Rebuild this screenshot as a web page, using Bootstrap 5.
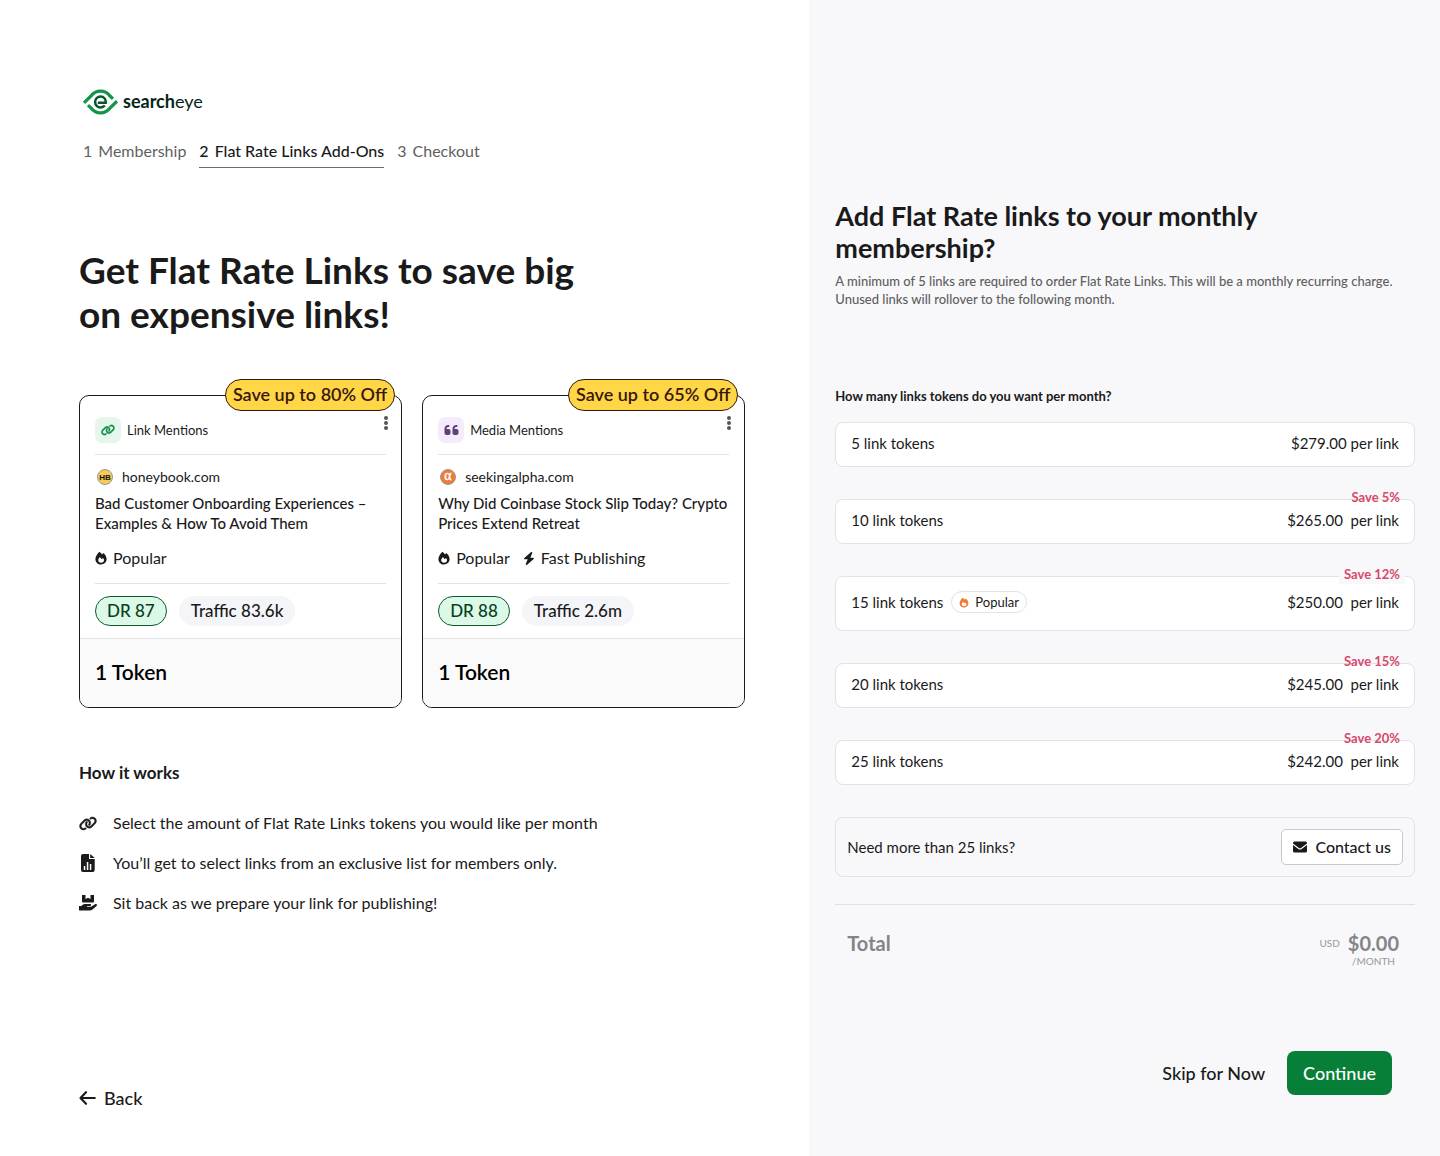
<!DOCTYPE html>
<html lang="en">
<head>
<meta charset="utf-8">
<meta name="viewport" content="width=device-width, initial-scale=1">
<title>Searcheye – Flat Rate Links Add-Ons</title>
<link href="https://cdn.jsdelivr.net/npm/bootstrap@5.3.0/dist/css/bootstrap.min.css" rel="stylesheet">
<style>
body{font-family:Lato,"Liberation Sans",sans-serif;font-size:15px;line-height:20px;color:#1a1a1a;background:#fff}
a{color:inherit;text-decoration:none}
svg{display:block;flex:none}
.pane-left{flex:0 0 56.2%;padding:88px 64px 48px 79px}
.pane-right{background:#f8f8fb;padding:200px 25px 61px 26px}
.brand{gap:5px;padding-left:4px;height:28px;font-size:18px;line-height:26px;color:#04261a}
.brand span{margin-top:-2px}
.steps{margin-top:25px;gap:13px;padding-left:4px;color:#5f5f5f;font-size:16px}
.steps a{display:flex;gap:6px;padding-bottom:6px;border-bottom:1px solid transparent}
.steps a.current{color:#1a1a1a;border-color:#6b6b6b;font-weight:500}
h1{font-size:37px;line-height:44px;font-weight:700;margin:80px 0 59px}
.offers{gap:20px}
.offer{flex:1 1 0;min-width:0;border:1px solid #1a1a1a;border-radius:10px}
.offer-body{padding:21px 15px 12px}
.offer-kind{gap:6px;margin-bottom:11px;font-size:13px}
.kind-icon{width:26px;height:26px;border-radius:7px;background:#e5f7ed;color:#0b8a43}
.kind-icon.media{background:#f5ecfb;color:#5f3f78}
.rule{border-top:1px solid #e2e2e2}
.offer-site{margin-top:12px;gap:8px;padding-left:1px;font-size:14px}
.site-mark{font-family:"Liberation Sans",sans-serif;font-size:8px;font-weight:700}
.site-mark.alpha{font-family:"Liberation Serif",serif;font-size:14px;font-weight:400}
.offer-title{margin:6px -14px 15px 0;font-size:15px;line-height:20px;font-weight:500}
.tags{gap:13px;margin-bottom:15px;font-size:16px}
.tags span{display:flex;align-items:center;gap:6px}
.pills{gap:12px;margin-top:12px}
.stat-pill{height:30px;border-radius:15px;padding:0 12px;font-size:17px;line-height:29px;font-weight:500;background:#f4f5f8}
.stat-pill.dr{border:1px solid #0b5a30;background:#dcf8e6;color:#06401f;line-height:27px;padding:0 11px}
.offer-foot{background:#fafafa;border-top:1px solid #e2e2e2;border-radius:0 0 9px 9px;padding:16px 15px 18px;font-size:21px;line-height:34px;font-weight:600;color:#000}
.save-tag{right:6px;top:-17px;height:32px;border:1px solid #38180e;border-radius:16px;background:#ffd645;color:#38180e;padding:0 7px;font-size:18px;line-height:29px;font-weight:600}
.more{right:11px;top:18px;color:#555;padding:2px}
h2.how{font-size:17px;line-height:24px;font-weight:700;margin:53px 0 28px}
.how-list{gap:20px;font-size:16px}
.how-list li{gap:16px}
.back{font-size:18px;gap:8px;font-weight:500}
.ask{font-size:27px;line-height:32px;font-weight:700;margin-bottom:8px}
.note{font-size:13px;line-height:18px;font-weight:500;color:#5f5f5f;margin-bottom:78px}
legend{font-size:13px;line-height:20px;font-weight:700;margin-bottom:16px}
.options{gap:32px}
.option{border:1px solid #e2e2e6;border-radius:8px;background:#fff;padding:10px 15px 13px;cursor:pointer}
.option.featured{padding:14px 15px 17px}
.btn-check:focus-visible+.option{outline:2px solid #087f38}
.save-note{top:-13px;right:9px;padding:0 5px;font-size:13px;font-weight:700;color:#d6496a}
.featured .save-note{background:#f8f8fb}
.hot{height:22px;border:1px solid #e2e2e6;border-radius:11px;padding:0 7px;gap:6px;font-size:13px;margin-left:8px}
.more-box{margin-top:32px;border:1px solid #e2e2e6;border-radius:8px;padding:11px}
.btn-contact{height:36px;border:1px solid #c3c8d2;border-radius:5px;background:#fff;color:#1a1a1a;font-size:16px;line-height:20px;font-weight:500;padding:0 11px;gap:8px}
.total{margin-top:27px;border-top:1px solid #e0e0e4;padding:27px 16px 0 12px;color:#858585;font-size:20px;line-height:22px;font-weight:700}
.tiny{font-size:10px;line-height:15px;font-weight:500;color:#a0a0a0}
.actions{gap:22px;padding-right:23px}
.btn-plain{border:0;padding:0;font-size:18px;font-weight:500;color:#1a1a1a}
.btn-go{height:44px;border:0;border-radius:8px;background:#087f38;color:#fff;font-size:18px;font-weight:500;padding:0 16px}
</style>
</head>
<body>
<svg width="0" height="0" class="position-absolute" aria-hidden="true">
<symbol id="i-link" viewBox="0 0 640 512"><path fill="currentColor" stroke="currentColor" stroke-width="12" d="M579.8 267.7c56.5-56.5 56.5-148 0-204.5c-50-50-128.8-56.5-186.300-15.400l-1.600 1.100c-14.400 10.300-17.700 30.300-7.400 44.600s30.300 17.700 44.600 7.400l1.600-1.100c32.100-22.900 76-19.300 103.800 8.600c31.500 31.500 31.500 82.500 0 114L422.300 334.800c-31.500 31.500-82.500 31.500-114 0c-27.900-27.900-31.500-71.800-8.600-103.800l1.100-1.600c10.300-14.400 6.900-34.400-7.400-44.600s-34.400-6.900-44.600 7.400l-1.100 1.600C206.500 251.200 213 330 263 380c56.500 56.500 148 56.500 204.500 0L579.800 267.700zM60.200 244.300c-56.500 56.500-56.500 148 0 204.500c50 50 128.800 56.500 186.300 15.400l1.600-1.100c14.400-10.300 17.700-30.300 7.400-44.600s-30.300-17.700-44.600-7.400l-1.600 1.100c-32.100 22.900-76 19.300-103.800-8.600C74 372 74 321 105.500 289.500L217.700 177.200c31.500-31.500 82.500-31.500 114 0c27.900 27.900 31.500 71.800 8.600 103.900l-1.100 1.600c-10.300 14.400-6.900 34.400 7.400 44.600s34.400 6.900 44.600-7.400l1.100-1.600C433.500 260.800 427 182 377 132c-56.500-56.500-148-56.500-204.500 0L60.200 244.300z"/></symbol>
<symbol id="i-fire" viewBox="0 0 12 14"><path fill="currentColor" fill-rule="evenodd" d="M4.300.8c1.200.8 2.100 1.700 2.800 2.700L8.200 2c2.100 1.600 3.400 4 3.400 6.100C11.600 11.400 9 13.500 6 13.500S.4 11.200.4 8.200C.4 5.800 2.100 3 4.300.8ZM6.100 11.700c1.700 0 2.900-1 2.900-2.500 0-.9-.4-1.600-1-2.300L6.700 8.200 4.900 6C3.800 7.300 3.200 8.200 3.200 9.200c0 1.500 1.200 2.500 2.900 2.500Z"/></symbol>
<symbol id="i-bolt" viewBox="0 0 448 512"><path fill="currentColor" d="M349 45c6-14 2-30-11-39s-29-8-41 2L41 232c-10 9-14 23-9 36s17 20 30 20h112L99 467c-6 14-2 30 11 39s29 8 41-2l256-224c10-9 14-23 9-36s-17-20-30-20H274Z"/></symbol>
<symbol id="i-dots" viewBox="0 0 4 14"><g fill="currentColor"><circle cx="2" cy="2" r="2"/><circle cx="2" cy="7" r="2"/><circle cx="2" cy="12" r="2"/></g></symbol>
</svg>
<div class="d-flex min-vh-100">
<main class="pane-left d-flex flex-column">
  <a href="#" class="brand d-flex align-items-center">
    <svg width="35" height="26" viewBox="0 0 35 26" fill="none" aria-hidden="true"><g stroke="#149447" stroke-width="3.200"><path d="M1 13.800 7.800 7.200C12.700.4 22.300.4 27.200 7.200l2.800 2.600"/><path d="M34 12.200l-6.800 6.600c-4.900 6.800-14.500 6.800-19.400 0L5 16.200"/></g><path d="M14.800 13.800h7.900c.4-3.800-1.900-6.200-5.200-6.200a5.400 5.400 0 1 0 0 10.800c1.900 0 3.300-.7 4.300-1.900" stroke="#07552f" stroke-width="2.500"/></svg>
    <span><b>search</b>eye</span>
  </a>
  <nav class="steps d-flex" aria-label="Checkout steps">
    <a href="#"><span>1</span><span>Membership</span></a>
    <a href="#" class="current" aria-current="step"><span>2</span><span>Flat Rate Links Add-Ons</span></a>
    <a href="#"><span>3</span><span>Checkout</span></a>
  </nav>
  <h1>Get Flat Rate Links to save big<br>on expensive links!</h1>
  <div class="offers d-flex">
    <article class="offer position-relative">
      <span class="save-tag position-absolute">Save up to 80% Off</span>
      <button type="button" class="more btn border-0 position-absolute" aria-label="More options"><svg width="4" height="14"><use href="#i-dots"/></svg></button>
      <div class="offer-body">
        <div class="offer-kind d-flex align-items-center"><span class="kind-icon d-flex align-items-center justify-content-center"><svg width="14" height="12"><use href="#i-link"/></svg></span>Link Mentions</div>
        <div class="rule"></div>
        <div class="offer-site d-flex align-items-center"><svg width="18" height="18" viewBox="0 0 18 18"><circle cx="9" cy="9" r="7.500" fill="#f5cb55" stroke="#999"/><text class="site-mark" x="9" y="12" text-anchor="middle" fill="#111">HB</text></svg>honeybook.com</div>
        <h3 class="offer-title">Bad Customer Onboarding Experiences –<br>Examples &amp; How To Avoid Them</h3>
        <div class="tags d-flex"><span><svg width="12" height="14"><use href="#i-fire"/></svg>Popular</span></div>
        <div class="rule"></div>
        <div class="pills d-flex"><span class="stat-pill dr">DR 87</span><span class="stat-pill">Traffic 83.6k</span></div>
      </div>
      <div class="offer-foot">1 Token</div>
    </article>
    <article class="offer position-relative">
      <span class="save-tag position-absolute">Save up to 65% Off</span>
      <button type="button" class="more btn border-0 position-absolute" aria-label="More options"><svg width="4" height="14"><use href="#i-dots"/></svg></button>
      <div class="offer-body">
        <div class="offer-kind d-flex align-items-center"><span class="kind-icon media d-flex align-items-center justify-content-center"><svg width="15" height="16" viewBox="0 0 448 512"><path fill="currentColor" d="M0 216C0 149.700 53.700 96 120 96h8c17.700 0 32 14.300 32 32s-14.300 32-32 32h-8c-30.900 0-56 25.100-56 56v8h64c35.300 0 64 28.700 64 64v64c0 35.300-28.700 64-64 64H64c-35.300 0-64-28.700-64-64V216zm256 0c0-66.300 53.700-120 120-120h8c17.700 0 32 14.300 32 32s-14.300 32-32 32h-8c-30.900 0-56 25.100-56 56v8h64c35.300 0 64 28.700 64 64v64c0 35.300-28.700 64-64 64H320c-35.300 0-64-28.700-64-64V216z"/></svg></span>Media Mentions</div>
        <div class="rule"></div>
        <div class="offer-site d-flex align-items-center"><svg width="18" height="18" viewBox="0 0 18 18"><circle cx="9" cy="9" r="7.500" fill="#ef7a35" stroke="#999"/><text class="site-mark alpha" x="9" y="12" text-anchor="middle" fill="#fff" stroke="#fff" stroke-width=".4">α</text></svg>seekingalpha.com</div>
        <h3 class="offer-title">Why Did Coinbase Stock Slip Today? Crypto<br>Prices Extend Retreat</h3>
        <div class="tags d-flex"><span><svg width="12" height="14"><use href="#i-fire"/></svg>Popular</span><span><svg width="12" height="13"><use href="#i-bolt"/></svg>Fast Publishing</span></div>
        <div class="rule"></div>
        <div class="pills d-flex"><span class="stat-pill dr">DR 88</span><span class="stat-pill">Traffic 2.6m</span></div>
      </div>
      <div class="offer-foot">1 Token</div>
    </article>
  </div>
  <h2 class="how">How it works</h2>
  <ul class="how-list list-unstyled d-flex flex-column mb-0">
    <li class="d-flex align-items-center"><svg width="18" height="15"><use href="#i-link"/></svg>Select the amount of Flat Rate Links tokens you would like per month</li>
    <li class="d-flex align-items-center"><svg width="18" height="18" viewBox="0 0 18 18"><path fill="currentColor" fill-rule="evenodd" d="M4 0h6v5h5.700v11a2 2 0 0 1-2 2H4a2 2 0 0 1-2-2V2a2 2 0 0 1 2-2Zm.8 12v4h1.500v-4Zm3-4v8h1.500V8Zm3 2v6h1.500v-6ZM11.200 0l4.500 4h-4.500Z"/></svg>You’ll get to select links from an exclusive list for members only.</li>
    <li class="d-flex align-items-center"><svg width="18" height="18" viewBox="0 0 18 18"><path fill="currentColor" d="M3 1h3.500v4L9 3.800 11.500 5V1H15v6.500a1 1 0 0 1-1 1H4a1 1 0 0 1-1-1ZM0 12h2.300c1.500-1.500 2.500-2 4-2H11c1.500 0 1.500 2 0 2H8v.8h4l4-2.600c1.500-.8 2.700.8 1.500 1.900L13.500 15.500c-.9.600-1.800 1-3 1H0Z"/></svg>Sit back as we prepare your link for publishing!</li>
  </ul>
  <a href="#" class="back d-flex align-items-center mt-auto align-self-start"><svg width="17" height="14" viewBox="0 0 17 14" fill="none" stroke="currentColor" stroke-width="2.100" stroke-linecap="round" stroke-linejoin="round"><path d="M7 1.200 1.500 7 7 12.800M1.500 7h14.300"/></svg>Back</a>
</main>
<form class="pane-right flex-grow-1 d-flex flex-column">
  <h2 class="ask">Add Flat Rate links to your monthly<br>membership?</h2>
  <p class="note">A minimum of 5 links are required to order Flat Rate Links. This will be a monthly recurring charge.<br>Unused links will rollover to the following month.</p>
  <fieldset>
    <legend>How many links tokens do you want per month?</legend>
    <div class="options d-flex flex-column">
      <div><input class="btn-check" type="radio" name="tokens" id="t5"><label class="option d-flex" for="t5"><span>5 link tokens</span><span class="ms-auto">$279.00 per link</span></label></div>
      <div><input class="btn-check" type="radio" name="tokens" id="t10"><label class="option d-flex position-relative" for="t10"><span>10 link tokens</span><span class="save-note position-absolute">Save 5%</span><span class="ms-auto">$265.00&nbsp; per link</span></label></div>
      <div><input class="btn-check" type="radio" name="tokens" id="t15"><label class="option featured d-flex align-items-center position-relative" for="t15"><span>15 link tokens</span><span class="hot d-flex align-items-center"><svg width="10" height="11" color="#ee7b30"><use href="#i-fire"/></svg>Popular</span><span class="save-note position-absolute">Save 12%</span><span class="ms-auto">$250.00&nbsp; per link</span></label></div>
      <div><input class="btn-check" type="radio" name="tokens" id="t20"><label class="option d-flex position-relative" for="t20"><span>20 link tokens</span><span class="save-note position-absolute">Save 15%</span><span class="ms-auto">$245.00&nbsp; per link</span></label></div>
      <div><input class="btn-check" type="radio" name="tokens" id="t25"><label class="option d-flex position-relative" for="t25"><span>25 link tokens</span><span class="save-note position-absolute">Save 20%</span><span class="ms-auto">$242.00&nbsp; per link</span></label></div>
    </div>
  </fieldset>
  <div class="more-box d-flex align-items-center justify-content-between"><span>Need more than 25 links?</span><button type="button" class="btn btn-contact d-flex align-items-center"><svg width="14" height="12" viewBox="0 0 14 12"><path fill="currentColor" d="M1.500.5h11A1.500 1.500 0 0 1 14 2v.6L8 7.100c-.6.4-1.400.4-2 0L0 2.600V2A1.500 1.500 0 0 1 1.500.5ZM0 4l5.300 4c1 .8 2.400.8 3.400 0L14 4v6a1.500 1.500 0 0 1-1.500 1.500h-11A1.500 1.500 0 0 1 0 10Z"/></svg>Contact us</button></div>
  <div class="total d-flex justify-content-between"><span>Total</span><div><div class="d-flex"><span class="tiny me-2 mt-1">USD</span><span>$0.00</span></div><div class="tiny text-end pe-1">/MONTH</div></div></div>
  <div class="actions d-flex justify-content-end align-items-center mt-auto"><button type="button" class="btn btn-plain">Skip for Now</button><button type="submit" class="btn btn-go">Continue</button></div>
</form>
</div>
<script src="https://cdn.jsdelivr.net/npm/bootstrap@5.3.0/dist/js/bootstrap.bundle.min.js"></script>
</body>
</html>
